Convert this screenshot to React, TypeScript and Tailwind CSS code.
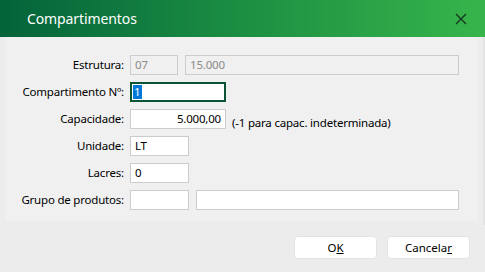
import React from "react"

const font = { fontFamily: '"Noto Sans", "Open Sans", sans-serif' }

const Field = ({ value, className = "", align = "left", muted = false }: { value?: string; className?: string; align?: "left" | "right"; muted?: boolean }) => (
  <div
    className={`h-[20px] bg-white border border-[#cccccc] px-[4px] flex items-center text-[11.5px] tracking-[-0.2px] ${
      align === "right" ? "justify-end" : ""
    } ${muted ? "text-[#8a8a8a]" : "text-[#000000]"} ${className}`}
  >
    {value}
  </div>
)

const Label = ({ children }: { children: React.ReactNode }) => (
  <div className="w-[125px] pr-[6px] text-right text-[11.5px] tracking-[-0.2px] text-[#000000] shrink-0">{children}</div>
)

export default function App() {
  return (
    <div className="w-[485px] h-[272px] bg-[#ececec] flex flex-col overflow-hidden" style={font}>
      <div className="h-[37px] shrink-0 flex items-center justify-between pl-[27px] pr-[18px] bg-gradient-to-r from-[#03633a] via-[#1c8f42] to-[#37b54b]">
        <span className="text-white text-[14px] tracking-[-0.1px]">Compartimentos</span>
        <svg width="12" height="12" viewBox="0 0 12 12" className="text-[#17301c]">
          <path d="M1 1L11 11M11 1L1 11" stroke="currentColor" strokeWidth="1.2" />
        </svg>
      </div>

      <div className="flex flex-1">
        <div className="flex-1 mx-[5px] mb-[4px] bg-[#f0f0f0] pt-[18px] flex flex-col gap-[7px]">
          <div className="flex items-center h-[20px]">
            <Label>Estrutura:</Label>
            <Field value="07" muted className="w-[48px] !bg-[#f0f0f0]" />
            <Field value="15.000" muted className="w-[274px] ml-[7px] !bg-[#f0f0f0]" />
          </div>
          <div className="flex items-center h-[20px]">
            <Label>Compartimento Nº:</Label>
            <div className="w-[96px] h-[20px] border-2 border-[#0b5436] bg-white flex items-center pl-[1px]">
              <span className="bg-[#0078d7] text-white text-[11.5px] leading-[14px] px-[1px]">1</span>
            </div>
          </div>
          <div className="flex items-center h-[20px]">
            <Label>Capacidade:</Label>
            <Field value="5.000,00" align="right" className="w-[96px]" />
            <span className="ml-[6px] relative top-[4px] text-[11.5px] tracking-[-0.2px] text-[#000000]">
              (-1 para capac. indeterminada)
            </span>
          </div>
          <div className="flex items-center h-[20px]">
            <Label>Unidade:</Label>
            <Field value="LT" className="w-[59px]" />
          </div>
          <div className="flex items-center h-[20px]">
            <Label>Lacres:</Label>
            <Field value="0" className="w-[59px]" />
          </div>
          <div className="flex items-center h-[20px]">
            <Label>Grupo de produtos:</Label>
            <Field className="w-[59px]" />
            <Field className="w-[263px] ml-[7px]" />
          </div>
        </div>
        <div className="w-[2px] bg-[#e4e4e4]" />
      </div>

      <div className="h-[47px] shrink-0 flex items-start justify-end gap-[10px] pr-[15px] pt-[11px]">
        <button className="w-[83px] h-[23px] bg-white rounded-[4px] border border-[#e3e3e3] text-[11.5px] text-[#000000]">
          O<span className="underline">K</span>
        </button>
        <button className="w-[83px] h-[23px] bg-white rounded-[4px] border border-[#e3e3e3] text-[11.5px] text-[#000000]">
          Cancela<span className="underline">r</span>
        </button>
      </div>
    </div>
  )
}
